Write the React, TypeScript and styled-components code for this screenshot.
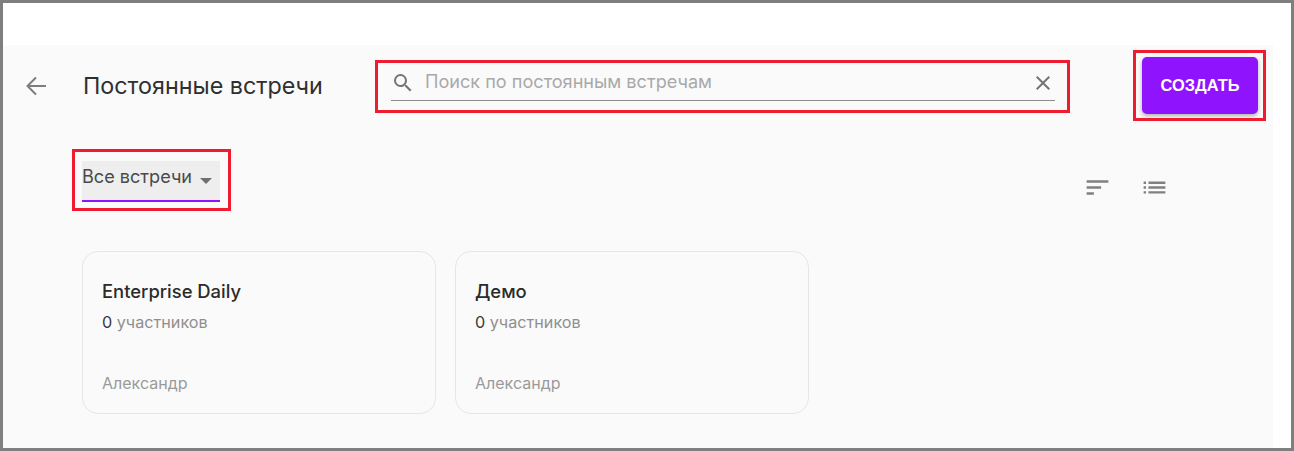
import styled, { createGlobalStyle } from 'styled-components'
import { MdClose, MdList, MdSearch, MdSort } from 'react-icons/md'

const GlobalStyle = createGlobalStyle`
  html, body {
    margin: 0;
    padding: 0;
    background: #fff;
  }
  body {
    font-family: Inter, "Noto Sans", sans-serif;
  }
`

const Frame = styled.div`
  box-sizing: border-box;
  width: 1294px;
  height: 451px;
  border: 3px solid #7f7f7f;
  background: #fff;
  padding-top: 42px;
  overflow: hidden;
`

const Panel = styled.div`
  position: relative;
  box-sizing: border-box;
  width: 1270px;
  height: 403px;
  background: #fafafa;
`

const Header = styled.div`
  display: flex;
  align-items: flex-start;
  height: 70px;
  padding: 12px 0 0 19px;
`

const BackButton = styled.div`
  display: flex;
  width: 28px;
  height: 28px;
  margin-top: 15px;
  color: #7d7d7d;
`

const Title = styled.h1`
  margin: 16px 0 0 33px;
  width: 308px;
  font-size: 23.3px;
  line-height: 26px;
  font-weight: 400;
  color: #2f2f2f;
  white-space: nowrap;
`

const SearchField = styled.div`
  display: flex;
  align-items: center;
  box-sizing: border-box;
  width: 664px;
  height: 30px;
  margin-top: 14px;
  padding-bottom: 5px;
  border-bottom: 1px solid #8c8c8c;
  color: #757575;
`

const SearchText = styled.span`
  flex: 1;
  margin: 0 0 4px 10px;
  font-size: 18.1px;
  color: #a9a9a9;
`

const CreateButton = styled.button`
  box-sizing: border-box;
  width: 116px;
  height: 57px;
  margin: 0 0 0 87px;
  padding: 0;
  border: 0;
  border-radius: 5px;
  background: #9013fe;
  box-shadow: 0 2px 4px rgba(0, 0, 0, 0.3);
  color: #fff;
  font-family: "Liberation Sans", Arial, sans-serif;
  font-size: 16.4px;
  font-weight: 700;
`

const Toolbar = styled.div`
  display: flex;
  align-items: flex-start;
  justify-content: space-between;
  height: 90px;
  padding: 34px 104px 0 79px;
`

const FilterSelect = styled.div`
  display: flex;
  align-items: center;
  gap: 8px;
  box-sizing: border-box;
  width: 138px;
  height: 41px;
  padding-bottom: 10px;
  background: #eeeeee;
  border-bottom: 2px solid #9013fe;
  color: #4a4a4a;
  font-size: 18.1px;
`

const Caret = styled.span`
  width: 0;
  height: 0;
  margin-top: 10px;
  border-left: 6px solid transparent;
  border-right: 6px solid transparent;
  border-top: 6px solid #6f6f6f;
`

const ViewIcons = styled.div`
  display: flex;
  gap: 28px;
  margin-top: 12px;
  color: #808080;
`

const Cards = styled.div`
  display: flex;
  gap: 19px;
  padding-left: 79px;
`

const Card = styled.div`
  box-sizing: border-box;
  display: flex;
  flex-direction: column;
  width: 354px;
  height: 163px;
  padding: 26px 19px 0;
  border: 1px solid #e6e6e6;
  border-radius: 16px;
`

const CardTitle = styled.div`
  font-size: 18.4px;
  line-height: 26px;
  font-weight: 500;
  color: #2b2b2b;
`

const CardMeta = styled.div`
  margin-top: 8px;
  font-size: 16.2px;
  line-height: 20px;
  color: #8f8f8f;

  b {
    font-weight: 400;
    color: #3a3a3a;
  }
`

const CardOwner = styled.div`
  margin-top: 41px;
  font-size: 16px;
  line-height: 20px;
  color: #9a9a9a;
`

const Highlight = styled.div<{ $x: number; $y: number; $w: number; $h: number }>`
  position: absolute;
  box-sizing: border-box;
  left: ${p => p.$x}px;
  top: ${p => p.$y}px;
  width: ${p => p.$w}px;
  height: ${p => p.$h}px;
  border: 3px solid #ee1c2e;
`

const BackArrow = () => (
  <svg width="28" height="28" viewBox="0 0 28 28" fill="none" stroke="currentColor" strokeWidth="2">
    <path d="M24 14H6M14 5.5L5.5 14l8.5 8.5" />
  </svg>
)

const meetings = [{ title: 'Enterprise Daily' }, { title: 'Демо' }]

export default function App() {
  return (
    <>
      <GlobalStyle />
      <Frame>
        <Panel>
          <Header>
            <BackButton><BackArrow /></BackButton>
            <Title>Постоянные встречи</Title>
            <SearchField>
              <MdSearch size={24} />
              <SearchText>Поиск по постоянным встречам</SearchText>
              <MdClose size={24} />
            </SearchField>
            <CreateButton>СОЗДАТЬ</CreateButton>
          </Header>
          <Toolbar>
            <FilterSelect>
              Все встречи
              <Caret />
            </FilterSelect>
            <ViewIcons>
              <MdSort size={29} />
              <MdList size={29} />
            </ViewIcons>
          </Toolbar>
          <Cards>
            {meetings.map(m => (
              <Card key={m.title}>
                <CardTitle>{m.title}</CardTitle>
                <CardMeta><b>0</b> участников</CardMeta>
                <CardOwner>Александр</CardOwner>
              </Card>
            ))}
          </Cards>
          <Highlight $x={372} $y={15} $w={695} $h={53} />
          <Highlight $x={1130} $y={5} $w={133} $h={71} />
          <Highlight $x={69} $y={104} $w={159} $h={62} />
        </Panel>
      </Frame>
    </>
  )
}
